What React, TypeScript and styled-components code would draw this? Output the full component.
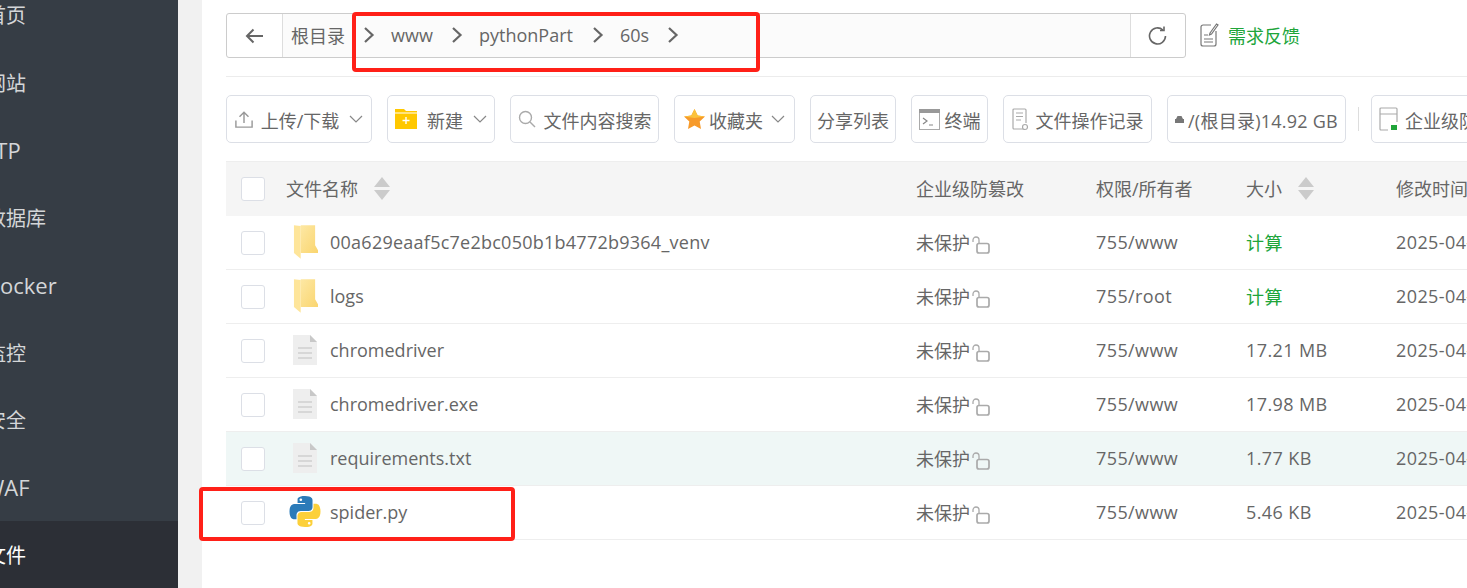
import React from "react"
import styled, { createGlobalStyle } from "styled-components"

const Global = createGlobalStyle`
  html, body {
    margin: 0;
    height: 588px;
    overflow: hidden;
    background: #f1f1f1;
    font-family: "Open Sans", "Noto Sans CJK SC", sans-serif;
  }
`

const Page = styled.div`
  position: relative;
  display: flex;
  width: 1467px;
  height: 588px;
  overflow: hidden;
`

const Sidebar = styled.nav`
  flex: none;
  width: 178px;
  background: #363d45;
  overflow: hidden;
`

const SideList = styled.div`
  margin-top: -19px;
`

const SideItem = styled.div<{ $active?: boolean }>`
  height: 67.5px;
  display: flex;
  align-items: center;
  background: ${(p) => (p.$active ? "#2c2f36" : "transparent")};
  color: ${(p) => (p.$active ? "#ffffff" : "#d4d6d8")};
  font-size: 20px;
  white-space: nowrap;
`

const SideLabel = styled.span<{ $latin?: boolean }>`
  margin-left: ${(p) => (p.$latin ? "-16px" : "-14px")};
  font-size: ${(p) => (p.$latin ? "22px" : "20px")};
`

const Main = styled.main`
  flex: none;
  width: 1265px;
  margin-left: 24px;
  background: #fff;
  padding: 13px 0 0 24px;
  box-sizing: border-box;
  overflow: hidden;
  color: #666;
`

const PathRow = styled.div`
  display: flex;
  align-items: center;
  height: 45px;
`

const PathBar = styled.div`
  width: 960px;
  height: 45px;
  box-sizing: border-box;
  display: flex;
  border: 1px solid #ccc;
  border-radius: 3px;
  background: #fff;
`

const PathButton = styled.div<{ $side: "left" | "right" }>`
  flex: none;
  width: ${(p) => (p.$side === "left" ? 55 : 54)}px;
  display: flex;
  align-items: center;
  justify-content: center;
  ${(p) => (p.$side === "left" ? "border-right" : "border-left")}: 1px solid #ddd;
`

const Crumbs = styled.div`
  flex: 1;
  display: flex;
  align-items: center;
  background: #fbfbfb;
  font-size: 18px;
  padding-bottom: 2px;
  padding-left: 8px;
`

const Crumb = styled.span<{ $w: number }>`
  width: ${(p) => p.$w}px;
  white-space: nowrap;
`

const CrumbArrow = styled.span<{ $w: number }>`
  width: ${(p) => p.$w}px;
  display: flex;
  align-items: center;
`

const Feedback = styled.div`
  display: flex;
  align-items: center;
  gap: 9px;
  margin-left: 14px;
  padding-bottom: 2px;
  font-size: 18px;
  color: #20a53a;
`

const Divider = styled.div`
  height: 1px;
  background: #ececec;
  margin-top: 18px;
`

const Toolbar = styled.div`
  display: flex;
  align-items: center;
  gap: 15px;
  margin-top: 18px;
  white-space: nowrap;
`

const ToolButton = styled.div<{ $w: number; $gap?: number }>`
  flex: none;
  width: ${(p) => p.$w}px;
  height: 48px;
  box-sizing: border-box;
  border: 1px solid #dcdfe6;
  border-radius: 5px;
  display: flex;
  align-items: center;
  justify-content: center;
  gap: ${(p) => p.$gap ?? 5}px;
  font-size: 18px;
  color: #666;
  overflow: hidden;
`

const ToolText = styled.span<{ $wide?: boolean; $after?: number }>`
  padding-top: 2px;
  margin-right: ${(p) => p.$after ?? 0}px;
  letter-spacing: ${(p) => (p.$wide ? "0.25px" : "0")};
`

const ToolSep = styled.div`
  flex: none;
  width: 1px;
  height: 24px;
  background: #ddd;
  margin: 0 -3px 0 -3px;
`

const Table = styled.div`
  margin-top: 18px;
  width: 1300px;
  font-size: 18px;
`

const Row = styled.div<{ $head?: boolean; $hover?: boolean }>`
  display: grid;
  grid-template-columns: 60px 630px 180px 150px 150px 130px;
  align-items: center;
  height: ${(p) => (p.$head ? 55 : 54)}px;
  box-sizing: border-box;
  padding-bottom: 2px;
  border-bottom: 1px solid #eee;
  background: ${(p) => (p.$head ? "#f5f5f5" : p.$hover ? "#eff7f6" : "#fff")};
  ${(p) => (p.$head ? "border-top: 1px solid #eee; border-bottom: none;" : "")}
  white-space: nowrap;
`

const CheckCell = styled.div`
  padding: 2px 0 0 15px;
`

const Check = styled.div`
  width: 24px;
  height: 24px;
  box-sizing: border-box;
  background: #fff;
  border: 1px solid #dcdfe6;
  border-radius: 3px;
`

const HeadCell = styled.div`
  display: flex;
  align-items: center;
  gap: 16px;
  color: #666;
`

const NameCell = styled.div`
  display: flex;
  align-items: center;
`

const NameText = styled.span<{ $wide?: boolean }>`
  letter-spacing: ${(p) => (p.$wide ? "0.25px" : "0")};
`

const IconSlot = styled.span`
  flex: none;
  width: 44px;
  display: flex;
  justify-content: center;
  padding-right: 6px;
  box-sizing: border-box;
`

const ProtectCell = styled.div`
  display: flex;
  align-items: center;
  gap: 2px;
`

const Lock = styled.svg`
  margin-top: 6px;
`

const DataCell = styled.div`
  letter-spacing: 0.4px;
`

const SizeCell = styled(DataCell)<{ $link?: boolean }>`
  color: ${(p) => (p.$link ? "#20a53a" : "#666")};
`

const RedBox = styled.div<{ $x: number; $y: number; $w: number; $h: number }>`
  position: absolute;
  left: ${(p) => p.$x}px;
  top: ${(p) => p.$y}px;
  width: ${(p) => p.$w}px;
  height: ${(p) => p.$h}px;
  box-sizing: border-box;
  border: 4px solid #ff2018;
  border-radius: 4px;
  pointer-events: none;
`

const Chevron = () => (
  <svg width="12" height="18" viewBox="0 0 12 18" fill="none" stroke="#666" strokeWidth="2.2">
    <path d="M2 2l7.5 7L2 16" />
  </svg>
)

const SmallDown = () => (
  <svg width="14" height="9" viewBox="0 0 14 9" fill="none" stroke="#888" strokeWidth="1.2">
    <path d="M1 1l6 6 6-6" />
  </svg>
)

const Sort = () => (
  <svg width="16" height="23" viewBox="0 0 16 23" fill="#cbcbcb">
    <path d="M8 0l8 10H0zM0 13h16L8 23z" />
  </svg>
)

const FolderIcon = () => (
  <svg width="25" height="35" viewBox="0 0 26 36">
    <defs>
      <linearGradient id="folderFill" x1="0" y1="0" x2="1" y2="1">
        <stop offset="0" stopColor="#fde8a4" />
        <stop offset="1" stopColor="#fad56f" />
      </linearGradient>
    </defs>
    <path d="M8 1h15v21l3 5v3H8z" fill="url(#folderFill)" />
    <path d="M1 1l7 1v34l-7-6z" fill="#fee59a" />
  </svg>
)

const FileIcon = () => (
  <svg width="24" height="30" viewBox="0 0 24 30">
    <path d="M0 0h17l7 7v23H0z" fill="#eeeeee" />
    <path d="M17 0l7 7h-7z" fill="#c8c8c8" />
    <path d="M5 13h14M5 18h14M5 23h14" stroke="#cfcfcf" strokeWidth="1.5" />
  </svg>
)

const PythonIcon = () => (
  <svg width="32" height="31" viewBox="0 0 110 110">
    <path
      fill="#2b7bb9"
      d="M54.9 0C26.8 0 28.6 12.2 28.6 12.2v12.6h26.8v3.8H17.9S0 26.6 0 54.9c0 28.3 15.6 27.3 15.6 27.3h9.3V69s-.5-15.6 15.4-15.6h26.5s14.9.2 14.9-14.4V14.8S84 0 54.9 0zM40.2 8.5a4.8 4.8 0 1 1 0 9.6 4.8 4.8 0 0 1 0-9.6z"
    />
    <path
      fill="#fcd03a"
      transform="rotate(180 55 55)"
      d="M54.9 0C26.8 0 28.6 12.2 28.6 12.2v12.6h26.8v3.8H17.9S0 26.6 0 54.9c0 28.3 15.6 27.3 15.6 27.3h9.3V69s-.5-15.6 15.4-15.6h26.5s14.9.2 14.9-14.4V14.8S84 0 54.9 0zM40.2 8.5a4.8 4.8 0 1 1 0 9.6 4.8 4.8 0 0 1 0-9.6z"
    />
  </svg>
)

const LockIcon = () => (
  <Lock width="18" height="18" viewBox="0 0 18 18" fill="none" stroke="#aaa" strokeWidth="1.7">
    <rect x="5" y="7.5" width="12" height="9.5" rx="2" />
    <path d="M1 6V4a3 3 0 0 1 6 0v3" strokeWidth="1.3" />
  </Lock>
)

const sideItems = ["首页", "网站", "FTP", "数据库", "Docker", "监控", "安全", "WAF", "文件"]
const latinItems = ["FTP", "Docker", "WAF"]

const files = [
  { name: "00a629eaaf5c7e2bc050b1b4772b9364_venv", kind: "folder", owner: "755/www", size: "计算", time: "2025-04-12 10:22:31" },
  { name: "logs", kind: "folder", owner: "755/root", size: "计算", time: "2025-04-12 10:25:02" },
  { name: "chromedriver", kind: "file", owner: "755/www", size: "17.21 MB", time: "2025-04-12 10:18:44" },
  { name: "chromedriver.exe", kind: "file", owner: "755/www", size: "17.98 MB", time: "2025-04-12 10:18:47" },
  { name: "requirements.txt", kind: "file", owner: "755/www", size: "1.77 KB", time: "2025-04-12 10:19:03" },
  { name: "spider.py", kind: "python", owner: "755/www", size: "5.46 KB", time: "2025-04-12 10:19:30" },
]

const App: React.FC = () => (
  <Page>
    <Global />
    <Sidebar>
      <SideList>
        {sideItems.map((item) => (
          <SideItem key={item} $active={item === "文件"}>
            <SideLabel $latin={latinItems.includes(item)}>{item}</SideLabel>
          </SideItem>
        ))}
      </SideList>
    </Sidebar>

    <Main>
      <PathRow>
        <PathBar>
          <PathButton $side="left">
            <svg width="20" height="16" viewBox="0 0 20 16" fill="none" stroke="#666" strokeWidth="2">
              <path d="M18 8H2M8.5 1.5L2 8l6.5 6.5" />
            </svg>
          </PathButton>
          <Crumbs>
            <Crumb $w={72}>根目录</Crumb>
            <CrumbArrow $w={28}><Chevron /></CrumbArrow>
            <Crumb $w={60}>www</Crumb>
            <CrumbArrow $w={28}><Chevron /></CrumbArrow>
            <Crumb $w={113}>pythonPart</Crumb>
            <CrumbArrow $w={28}><Chevron /></CrumbArrow>
            <Crumb $w={47}>60s</Crumb>
            <CrumbArrow $w={28}><Chevron /></CrumbArrow>
          </Crumbs>
          <PathButton $side="right">
            <svg width="20" height="20" viewBox="0 0 20 20" fill="none" stroke="#666" strokeWidth="1.6">
              <path d="M17.5 10a8 8 0 1 1-2.6-6" />
              <path d="M16 .5v4h-4" />
            </svg>
          </PathButton>
        </PathBar>
        <Feedback>
          <svg width="19" height="25" viewBox="0 0 19 25" fill="none" stroke="#777" strokeWidth="1.2">
            <path d="M11 3H3a2 2 0 0 0-2 2v17a2 2 0 0 0 2 2h11a2 2 0 0 0 2-2V9" />
            <path d="M10 11l6.5-9 1.5 1-6.5 9-2 1zM4 13h4M4 17h9M4 20h9" />
          </svg>
          需求反馈
        </Feedback>
      </PathRow>

      <Divider />

      <Toolbar>
        <ToolButton $w={146} $gap={8}>
          <svg width="18" height="19" viewBox="0 0 20 20" fill="none" stroke="#999" strokeWidth="1.6">
            <path d="M1 11v7.5h18V11M10 14V2M5 7l5-5 5 5" />
          </svg>
          <ToolText $after={2}>上传/下载</ToolText>
          <SmallDown />
        </ToolButton>
        <ToolButton $w={108} $gap={10}>
          <svg width="22" height="20" viewBox="0 0 22 20">
            <path d="M0 0h9l2 2h11v18H0z" fill="#ffc800" />
            <path d="M0 4h22" stroke="#fff" strokeWidth="1" />
            <path d="M11 8v7M7.5 11.5h7" stroke="#fff" strokeWidth="1.4" />
          </svg>
          <ToolText>新建</ToolText>
          <SmallDown />
        </ToolButton>
        <ToolButton $w={149} $gap={8}>
          <svg width="18" height="18" viewBox="0 0 18 18" fill="none" stroke="#aaa" strokeWidth="1.4">
            <circle cx="7.5" cy="7.5" r="6" />
            <path d="M12 12l5 5" />
          </svg>
          <ToolText>文件内容搜索</ToolText>
        </ToolButton>
        <ToolButton $w={121} $gap={4}>
          <svg width="21" height="20" viewBox="0 0 21 20">
            <path d="M10.5 0l3.2 6.6 7.3 1-5.3 5 1.3 7.4-6.5-3.5L4 20l1.3-7.4L0 7.6l7.3-1z" fill="#f79a2a" />
            <path d="M10.5 0l3.2 6.6 7.3 1L10.5 9 0 7.6l7.3-1z" fill="#fbc23c" />
          </svg>
          <ToolText $after={4}>收藏夹</ToolText>
          <SmallDown />
        </ToolButton>
        <ToolButton $w={86}><ToolText>分享列表</ToolText></ToolButton>
        <ToolButton $w={77}>
          <svg width="21" height="21" viewBox="0 0 21 21" fill="none">
            <rect x="0.5" y="0.5" width="20" height="20" fill="#fff" stroke="#aaa" />
            <rect x="0" y="0" width="21" height="4" fill="#999" />
            <path d="M4 9l4 3-4 3M10 16h4" stroke="#888" strokeWidth="1.2" />
          </svg>
          <ToolText>终端</ToolText>
        </ToolButton>
        <ToolButton $w={149} $gap={8}>
          <svg width="16" height="23" viewBox="0 0 16 23" fill="none" stroke="#aaa" strokeWidth="1.2">
            <path d="M11 21H2a1 1 0 0 1-1-1V2a1 1 0 0 1 1-1h11a1 1 0 0 1 1 1v13" />
            <path d="M4 5h7M4 8.5h7M4 12h5" />
            <circle cx="13" cy="19" r="2.5" />
          </svg>
          <ToolText>文件操作记录</ToolText>
        </ToolButton>
        <ToolButton $w={179} $gap={4}>
          <svg width="9" height="7" viewBox="0 0 9 7" fill="#777">
            <path d="M2.5 0h4L8 3h1v4H0V3h1z" />
          </svg>
          <ToolText $wide>/(根目录)14.92 GB</ToolText>
        </ToolButton>
        <ToolSep />
        <ToolButton $w={150} $gap={7}>
          <svg width="19" height="24" viewBox="0 0 19 24" fill="none" stroke="#aaa" strokeWidth="1.2">
            <path d="M9 23H2a1 1 0 0 1-1-1V2a1 1 0 0 1 1-1h15a1 1 0 0 1 1 1v13M1 7h17" />
            <rect x="12" y="18" width="6" height="5" fill="#20a53a" stroke="none" />
          </svg>
          <ToolText>企业级防篡改</ToolText>
        </ToolButton>
      </Toolbar>

      <Table>
        <Row $head>
          <CheckCell><Check /></CheckCell>
          <HeadCell>文件名称<Sort /></HeadCell>
          <HeadCell>企业级防篡改</HeadCell>
          <HeadCell>权限/所有者</HeadCell>
          <HeadCell>大小<Sort /></HeadCell>
          <HeadCell>修改时间<Sort /></HeadCell>
        </Row>
        {files.map((f, i) => (
          <Row key={f.name} $hover={f.name === "requirements.txt"}>
            <CheckCell><Check /></CheckCell>
            <NameCell>
              <IconSlot>
                {f.kind === "folder" && <FolderIcon />}
                {f.kind === "file" && <FileIcon />}
                {f.kind === "python" && <PythonIcon />}
              </IconSlot>
              <NameText $wide={i === 0}>{f.name}</NameText>
            </NameCell>
            <ProtectCell>未保护<LockIcon /></ProtectCell>
            <DataCell>{f.owner}</DataCell>
            <SizeCell $link={f.size === "计算"}>{f.size}</SizeCell>
            <DataCell>{f.time}</DataCell>
          </Row>
        ))}
      </Table>
    </Main>

    <RedBox $x={352} $y={12} $w={408} $h={60} />
    <RedBox $x={199} $y={487} $w={316} $h={54} />
  </Page>
)

export default App
